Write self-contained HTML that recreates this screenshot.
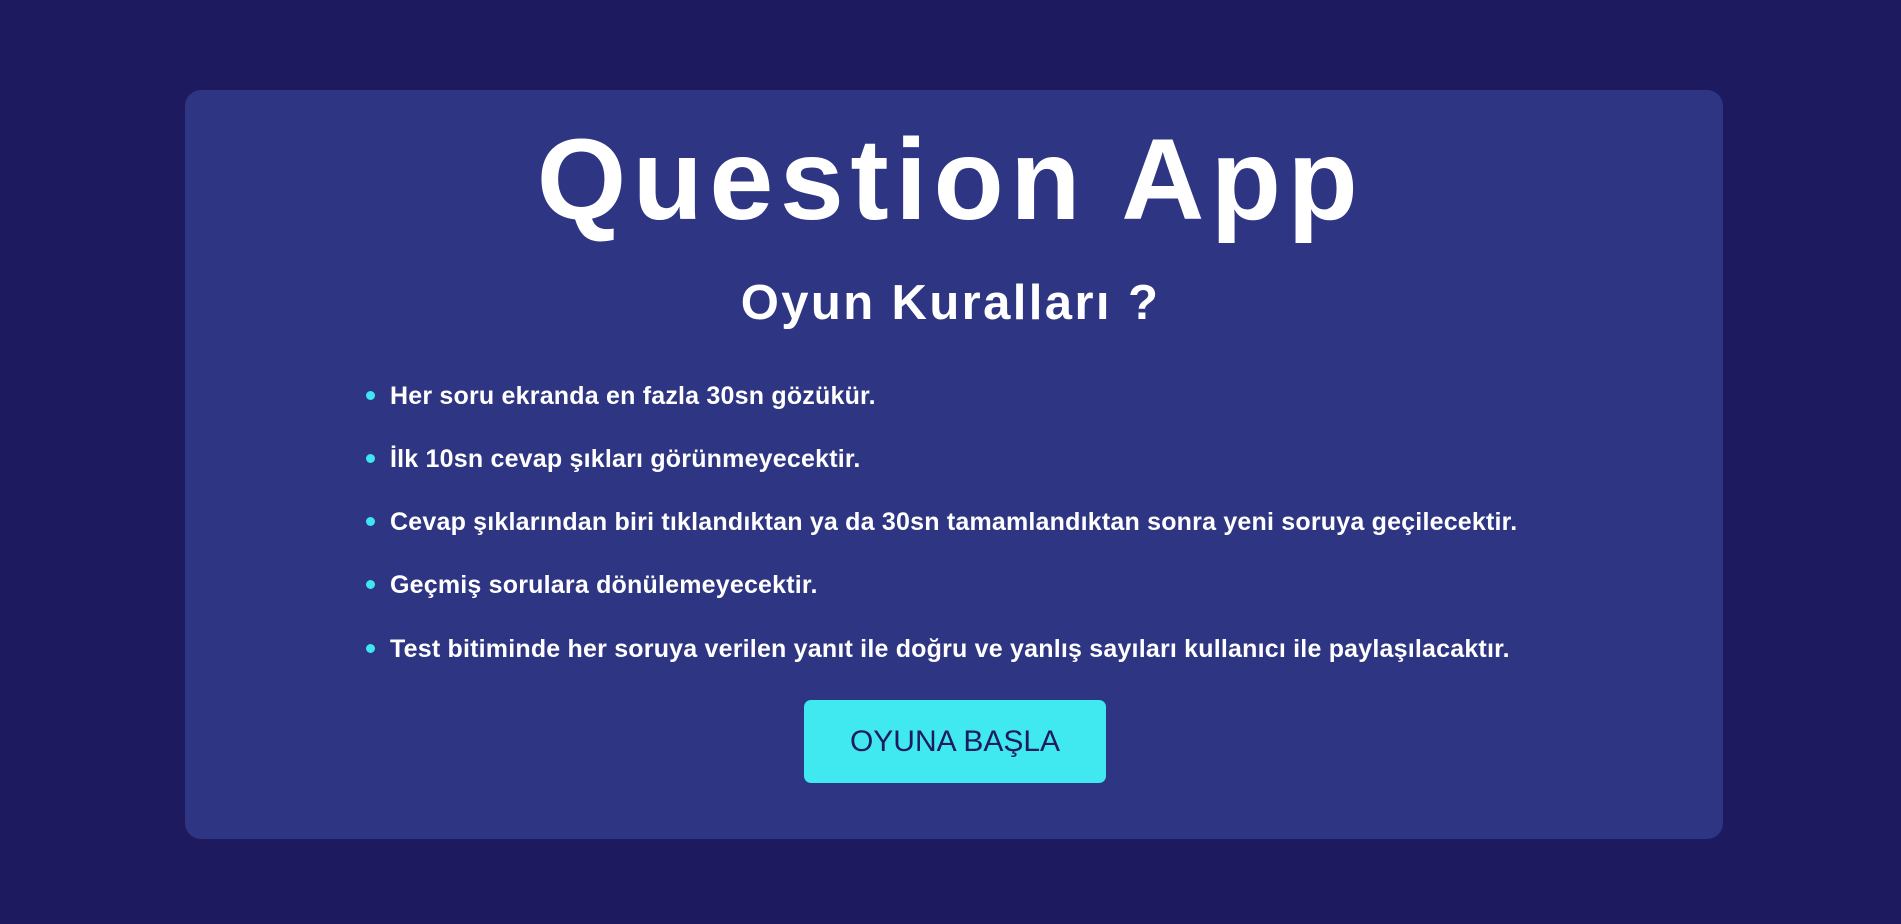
<!DOCTYPE html>
<html><head><meta charset="utf-8"><style>
html,body{margin:0;padding:0}
body{width:1901px;height:924px;background:#1d1a5f;font-family:"Liberation Sans",sans-serif;position:relative;overflow:hidden}
.card{position:absolute;left:185px;top:90px;width:1538px;height:749px;background:#2e3583;border-radius:16px}
h1{position:absolute;left:0;right:0;top:180px;margin:0;text-align:center;color:#fff;font-weight:700;font-size:115px;letter-spacing:6.5px;line-height:0}
h2{position:absolute;left:0;right:0;top:303px;margin:0;text-align:center;color:#fff;font-weight:700;font-size:49px;letter-spacing:2.4px;line-height:0}
.li{position:absolute;left:390px;color:#fff;font-weight:700;font-size:25px;letter-spacing:0.2px;line-height:0;white-space:nowrap}
.li::before{content:"";position:absolute;left:-24px;top:-5px;width:9px;height:9px;border-radius:50%;background:#3ee6f0}
.btn{position:absolute;left:804px;top:700px;width:302px;height:83px;background:#40e8f0;border-radius:7px;color:#1e1b5e;font-size:30px;text-align:center;line-height:83px}
</style></head><body>
<div class="card"></div>
<h1>Question App</h1>
<h2>Oyun Kuralları ?</h2>
<div class="li" style="top:396px">Her soru ekranda en fazla 30sn gözükür.</div>
<div class="li" style="top:459px">İlk 10sn cevap şıkları görünmeyecektir.</div>
<div class="li" style="top:522px">Cevap şıklarından biri tıklandıktan ya da 30sn tamamlandıktan sonra yeni soruya geçilecektir.</div>
<div class="li" style="top:585px">Geçmiş sorulara dönülemeyecektir.</div>
<div class="li" style="top:649px">Test bitiminde her soruya verilen yanıt ile doğru ve yanlış sayıları kullanıcı ile paylaşılacaktır.</div>
<div class="btn">OYUNA BAŞLA</div>
</body></html>
